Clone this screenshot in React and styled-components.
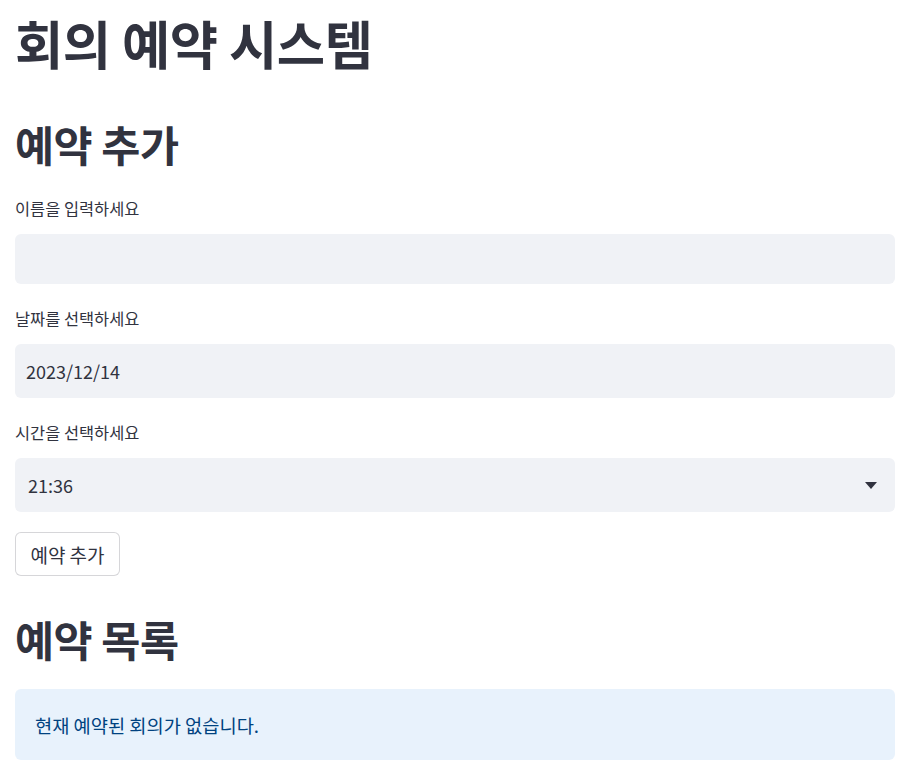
import styled, { createGlobalStyle } from "styled-components";

const GlobalStyle = createGlobalStyle`
  body {
    margin: 0;
    background: #ffffff;
    font-family: "Noto Sans CJK KR", "Noto Sans", sans-serif;
    color: rgb(49, 51, 63);
  }
`;

const Page = styled.div`
  padding: 0 20px 18px 15px;
  display: flex;
  flex-direction: column;
`;

const Title = styled.h1`
  margin: 0;
  padding-top: 9px;
  font-size: 52.5px;
  font-weight: 700;
  line-height: 66px;
  letter-spacing: -0.5px;
`;

const Heading = styled.h2`
  margin: ${(p) => p.$top}px 0 0;
  font-size: 42.5px;
  font-weight: 700;
  line-height: 54px;
  letter-spacing: -0.5px;
`;

const Field = styled.div`
  display: flex;
  flex-direction: column;
  gap: 14px;
  margin-top: ${(p) => p.$top}px;
`;

const Label = styled.label`
  font-size: 16.4px;
  line-height: 24px;
`;

const Input = styled.input`
  box-sizing: border-box;
  width: 100%;
  height: ${(p) => p.$h}px;
  border: none;
  outline: none;
  border-radius: 6px;
  background: rgb(240, 242, 246);
  padding: 0 11px;
  font-family: inherit;
  font-size: 18px;
  color: rgb(49, 51, 63);
`;

const Select = styled.div`
  box-sizing: border-box;
  height: 54px;
  border-radius: 6px;
  background: rgb(240, 242, 246);
  padding: 0 18px 0 13px;
  display: flex;
  align-items: center;
  justify-content: space-between;
  font-size: 18px;
`;

const Button = styled.button`
  align-self: flex-start;
  margin-top: 20px;
  height: 44px;
  width: 105px;
  box-sizing: border-box;
  background: #ffffff;
  border: 1px solid rgba(49, 51, 63, 0.2);
  border-radius: 6px;
  font-family: inherit;
  font-size: 19px;
  color: rgb(49, 51, 63);
  padding: 0;
`;

const Info = styled.div`
  margin-top: 23px;
  height: 71px;
  box-sizing: border-box;
  border-radius: 6px;
  background: rgba(28, 131, 225, 0.1);
  color: rgb(0, 66, 128);
  font-size: 18.7px;
  display: flex;
  align-items: center;
  padding: 0 20px;
`;

const Caret = () => (
  <svg width="12" height="7" viewBox="0 0 12 7">
    <path d="M0 0 H12 L6 7 Z" fill="rgb(49, 51, 63)" />
  </svg>
);

export default function App() {
  return (
    <Page>
      <GlobalStyle />
      <Title>회의 예약 시스템</Title>
      <Heading $top={42}>예약 추가</Heading>
      <Field $top={25}>
        <Label>이름을 입력하세요</Label>
        <Input $h={50} readOnly defaultValue="" />
      </Field>
      <Field $top={22}>
        <Label>날짜를 선택하세요</Label>
        <Input $h={54} readOnly defaultValue="2023/12/14" />
      </Field>
      <Field $top={22}>
        <Label>시간을 선택하세요</Label>
        <Select>
          <span>21:36</span>
          <Caret />
        </Select>
      </Field>
      <Button>예약 추가</Button>
      <Heading $top={36}>예약 목록</Heading>
      <Info>현재 예약된 회의가 없습니다.</Info>
    </Page>
  );
}
